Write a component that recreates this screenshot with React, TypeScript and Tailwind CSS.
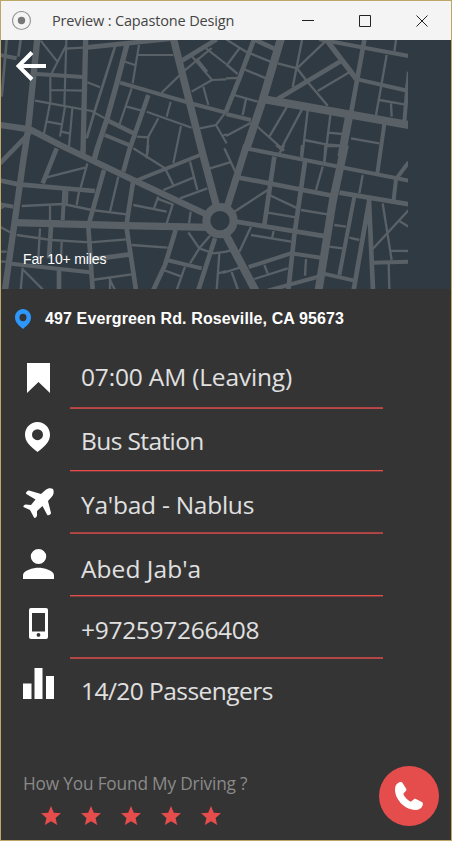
import React from "react";

type Tile = { x: number; y: number; roads: [number, string][] };

// Street grid, split in four tiles; each entry is [stroke width, path].
const tiles: Tile[] = [
  {
    x: 0,
    y: 0,
    roads: [
      [22, "M520 115L605 450L650 620"],
      [19, "M112 115L84 390L70 480L15 870M0 375L90 388L180 435L400 540L625 646"],
      [16, "M257 115L249 460M383 125L352 245L320 360L290 450L282 480"],
      [14, "M90 397L0 490M262 142L400 128L520 115M545 182L650 118M445 285L388 450L370 515M320 360L405 402"],
      [12, "M110 222L250 231M360 248L580 312L678 338M0 165L50 175M314 405L390 436"],
      [8, "M20 120L5 290M62 120L55 170M345 140L285 330L260 415"],
      [
        6.5,
        "M197 146L262 142M199 120L193 320M122 122L172 185M199 135L155 220M151 230L151 305M151 270L250 272M105 302L275 333L320 358M151 305L130 410M142 365L185 373M195 320L180 410M217 325L207 440M185 395L207 400M262 247L300 262M375 185L405 195M417 135L398 250M412 165L520 165M485 278L550 215L635 144M575 168L636 240L678 238M636 240L575 275M618 145L678 192M610 260L625 315M395 265L358 375M380 320L430 333M440 335L575 383M512 305L500 350M475 355L445 410L440 475M410 410L445 412M543 378L520 490M600 385L648 375L678 335M648 375L680 430M665 408L680 403M590 175L622 215",
      ],
    ],
  },
  {
    x: 678,
    y: 0,
    roads: [
      [24, "M165 115L110 300L60 450M110 297L548 375M370 345L346 470"],
      [16, "M303 122L392 238"],
      [14, "M88 120L155 151M84 118L40 235L0 335M415 120L375 340M345 183L155 297"],
      [12, "M280 118L415 143L548 168M395 238L548 273M0 342L75 360M475 372L454 520M66 446L548 542M545 250L535 365"],
      [
        7,
        "M0 118L60 155L133 185M55 208L120 235M40 145L3 195L35 222M0 235L35 234M25 285L95 305M60 298L50 345M75 368L0 408M155 190L213 205M228 120L200 262M298 124L213 205L240 240L305 317M370 217L275 273M510 120L505 155M482 165L460 290L450 345M460 300L535 313M495 310L497 350M183 320L130 410M228 328L165 447M92 378L175 452M245 332L228 475M313 345L295 490M308 398L350 402M235 420L300 433L345 437M375 415L460 430M546 215L541 270",
      ],
    ],
  },
  {
    x: 0,
    y: 435,
    roads: [
      [22, "M45 233L380 242L630 247"],
      [14, "M0 106L55 118L285 138M170 10L128 115M250 0L248 30M312 75L267 235M400 105L380 235M153 245L147 340M265 245L278 435M380 250L408 435M275 343L390 328M177 375L177 435M527 255L495 360L460 435M645 280L595 435"],
      [12, "M0 178L40 185M297 0L285 40M193 135L188 225M413 105L600 30M34 356L270 382M500 345L605 370"],
      [
        7,
        "M140 97L255 68M262 55L240 135M355 95L330 200M275 195L380 208M65 183L190 177L275 195M150 180V225M202 138L200 177M237 140L230 180M400 10L495 70L520 120M445 0L440 35M570 50L592 135M490 135L580 98M540 160L622 130M470 160L518 178L500 235M475 155L462 190M400 180L500 200M572 200L567 235M630 70L680 55M0 245L30 262M50 270L155 285L270 292L380 283M120 250L115 340M185 290L183 345M0 350H30M0 320H20M68 368L62 435M70 375L130 435M275 405L395 388M330 400V435M330 405L345 435M395 300L503 308M490 375L545 395M555 365L530 435M565 262L598 310L630 272M598 310L570 355M598 310L640 325L680 320M658 325L650 435M655 385L678 378M0 190L12 185",
      ],
    ],
  },
  {
    x: 678,
    y: 435,
    roads: [
      [24, "M357 0L320 170L278 435M-8 255L90 440"],
      [21, "M62 0L2 190"],
      [14, "M40 98L320 152M340 143L548 178M145 35L115 240M237 50L205 270L187 435M30 230L300 274M430 165L383 435M429 165L441 435"],
      [12, "M548 52L510 102L503 165M385 155L340 390M440 353L548 350M292 386L382 406M68 366L195 325L285 338M125 437L285 393"],
      [
        7,
        "M290 65L270 135M298 0L295 50M300 3H345M228 0L225 35M175 0L160 25M150 0L170 18M410 90L400 145M25 200L125 135M130 150L215 190M125 203L210 217M225 195L305 208M-5 10L28 80M0 55L12 52M470 175L497 345M548 195L440 312M520 228L548 245M490 317L548 318M488 355L490 435M325 240L360 245M370 278L400 285M310 305L350 310M75 245L40 320M75 270L195 290M143 258L138 280M-10 384L60 362M15 375L36 435M85 402L185 370M115 360L125 385M240 342L237 392M0 320L20 315",
      ],
    ],
  },
];

function StreetMap() {
  return (
    <svg width="407" height="249" viewBox="3 120 1221 747" fill="none" stroke="#596167" className="block">
      {tiles.map((t) => (
        <g key={`${t.x}-${t.y}`} transform={`translate(${t.x} ${t.y})`}>
          {t.roads.map(([w, d]) => (
            <path key={w} strokeWidth={w} d={d} />
          ))}
        </g>
      ))}
      <circle cx="660" cy="662" r="41" fill="#303a43" strokeWidth="24" />
    </svg>
  );
}

const PIN = "M12.5 0C5.600 0 0 5.600 0 12.500C0 20 5.500 24.500 12.500 30C19.500 24.500 25 20 25 12.500C25 5.600 19.400 0 12.500 0ZM12.500 7.200a5.500 5.500 0 1 1 0 11a5.500 5.500 0 0 1 0-11Z";

type IconProps = { box: string; w: number; h: number; d: string; className?: string };

function Glyph({ box, w, h, d, className }: IconProps) {
  return (
    <svg viewBox={box} width={w} height={h} preserveAspectRatio="none" fill="currentColor" fillRule="evenodd" className={className}>
      <path d={d} />
    </svg>
  );
}

const rows = [
  {
    text: "07:00 AM (Leaving)",
    label: "pt-[9.5px] tracking-[-0.17px]",
    iconPad: "pt-[16px]",
    line: "border-t-[#b04444] border-b-[#bc4848]",
    icon: <Glyph box="0 0 23 30" w={23} h={30} d="M0 0H23V30L11.5 19L0 30Z" />,
  },
  {
    text: "Bus Station",
    label: "pt-[11px] tracking-[-0.6px]",
    iconPad: "pt-[13px]",
    line: "border-t-[#e54d4d] border-b-[#6e3a3a]",
    icon: <Glyph box="0 0 25 30" w={25} h={30} d={PIN} className="mr-px" />,
  },
  {
    text: "Ya'bad - Nablus",
    label: "pt-[12.5px] tracking-[-0.25px]",
    iconPad: "pt-[16px]",
    line: "border-t-[#a94343] border-b-[#b54646]",
    icon: (
      <Glyph
        box="0 0 31 31"
        w={31}
        h={31}
        d="M30 1C28 0 25 0 22.500 2L18 6L6 2.500C5 2.300 3 4 3 5C3 6 4 6.500 5 7L12.500 11.500L8 17L2.500 16.500C1.500 16.500 0 18 .5 19L7 22L11 29.500C12 31 14 28.500 14 27.500L14 23L19.500 18L24 26.500C25 28.500 28 26.500 28 25L25 13L29 8.500C31 6 31 3 30 1Z"
      />
    ),
  },
  {
    text: "Abed Jab'a",
    label: "pt-[14px] tracking-[0.05px]",
    iconPad: "pt-[14.5px]",
    line: "border-t-[#e54d4d] border-b-[#7a3c3c]",
    icon: <Glyph box="4 4 16 16" w={31} h={30} d="M12 12a4 4 0 1 0 0-8 4 4 0 0 0 0 8zm0 2c-2.670 0-8 1.340-8 4v2h16v-2c0-2.660-5.330-4-8-4z" />,
  },
  {
    text: "+972597266408",
    label: "pt-[12.5px] tracking-[-0.3px]",
    iconPad: "pt-[11px]",
    line: "border-t-[#b54646] border-b-[#b54646]",
    icon: (
      <Glyph
        box="0 0 19 31"
        w={19}
        h={31}
        d="M2 0H17Q19 0 19 2V29Q19 31 17 31H2Q0 31 0 29V2Q0 0 2 0ZM3 5V23.500H16V5ZM9.500 25a1.900 1.900 0 1 0 0 3.800a1.900 1.900 0 0 0 0-3.800Z"
      />
    ),
  },
  {
    text: "14/20 Passengers",
    label: "pt-[11px] tracking-[-0.55px]",
    iconPad: "pt-[9px]",
    line: "border-t-transparent border-b-transparent",
    icon: <Glyph box="0 0 31 31" w={31} h={31} d="M0 15.500H8.500V31H0ZM11.500 0H19.500V31H11.500ZM23 8H31V31H23Z" />,
  },
];

export default function App() {
  return (
    <div className="flex h-[841px] w-[452px] flex-col overflow-hidden border border-[#bda766] bg-[#343434]">
      <header className="flex h-[39px] shrink-0 items-center bg-[#f4f4f4] font-['Open_Sans',sans-serif]">
        <svg width="20" height="20" viewBox="0 0 20 20" fill="none" className="ml-[11px]">
          <circle cx="9.500" cy="9.500" r="9" stroke="#999" strokeWidth="1.200" />
          <circle cx="9.500" cy="9.500" r="3.700" fill="#777" />
        </svg>
        <h1 className="ml-[20px] w-[200px] text-[14.5px] whitespace-nowrap tracking-[-0.15px] text-[#444]">Preview : Capastone Design</h1>
        <svg width="130" height="14" viewBox="0 0 130 14" fill="none" stroke="#222" className="-mt-[2px] ml-[50px]">
          <path d="M0 7.500H12M57.500 2.500H68.500V13.500H57.500ZM114.500 2.500L125.500 13.500M125.500 2.500L114.500 13.500" />
        </svg>
      </header>

      <section className="relative h-[249px] shrink-0 bg-[#303a43]">
        <StreetMap />
        <svg width="30" height="30" viewBox="0 0 30 30" fill="none" stroke="#fff" className="absolute top-[11px] left-[15px]">
          <path d="M16 1.500L2.500 15L16 28.500M2 15H30" strokeWidth="4" />
        </svg>
        <p className="absolute top-[209px] left-[22px] font-['Liberation_Sans',sans-serif] text-[14px] leading-[20px] tracking-[-0.15px] text-white">Far 10+ miles</p>
      </section>

      <div className="flex h-[57.5px] shrink-0 items-center pl-[14px] font-['Liberation_Sans',sans-serif] text-[16px] font-bold text-white">
        <Glyph box="0 0 25 30" w={16} h={20} d={PIN} className="mt-[2px] text-[#2d97fb]" />
        <span className="ml-[14px] pt-[2px] tracking-[0.12px]">497 Evergreen Rd. Roseville, CA 95673</span>
      </div>

      <ul className="flex flex-col font-['Open_Sans',sans-serif]">
        {rows.map((r) => (
          <li key={r.text} className="flex h-[62.5px]">
            <div className={`flex w-[69px] shrink-0 items-start justify-center pl-[5px] text-white ${r.iconPad}`}>{r.icon}</div>
            <div className="flex w-[313px] flex-col justify-between">
              <span className={`block pl-[11px] text-[24.5px] leading-[42px] whitespace-nowrap text-[#e0e0e0] ${r.label}`}>{r.text}</span>
              <div className={`h-[2px] shrink-0 border-t border-b ${r.line}`} />
            </div>
          </li>
        ))}
      </ul>

      <footer className="mt-auto flex h-[76px] shrink-0 justify-between">
        <div className="pl-[22px]">
          <p className="pt-[6px] font-['Open_Sans',sans-serif] text-[17.3px] leading-[28px] tracking-[-0.19px] whitespace-nowrap text-[#8a8a8a]">
            How You Found My Driving ?
          </p>
          <div className="flex gap-[20px] pt-[8px] pl-[18px]">
            {[1, 2, 3, 4, 5].map((n) => (
              <Glyph key={n} box="2 2 20 19" w={20} h={19} className="text-[#e54d4d]" d="M12 17.270L18.180 21l-1.640-7.030L22 9.240l-7.190-.61L12 2 9.190 8.630 2 9.240l5.460 4.730L5.820 21z" />
            ))}
          </div>
        </div>
        <button className="mt-[2px] mr-[12px] flex h-[60px] w-[60px] items-center justify-center rounded-full bg-[#e54d4d] text-white">
          <Glyph
            box="0 0 28 28"
            w={28}
            h={28}
            d="M4 .5C5.500-.2 7-.2 7.600 1L11 6.500C11.500 7.300 11.500 8 11 8.700L8.300 11.800C9 14.500 12.500 18.300 15.800 19.800L19 17.200C19.600 16.700 20.300 16.700 21 17L26.800 20C28 20.700 28.200 21.800 27.600 23.500C26.500 26.300 24 28 20.500 28C9 27.500 0 17 0 7.500C0 4 1.500 1.600 4 .5Z"
          />
        </button>
      </footer>
    </div>
  );
}
